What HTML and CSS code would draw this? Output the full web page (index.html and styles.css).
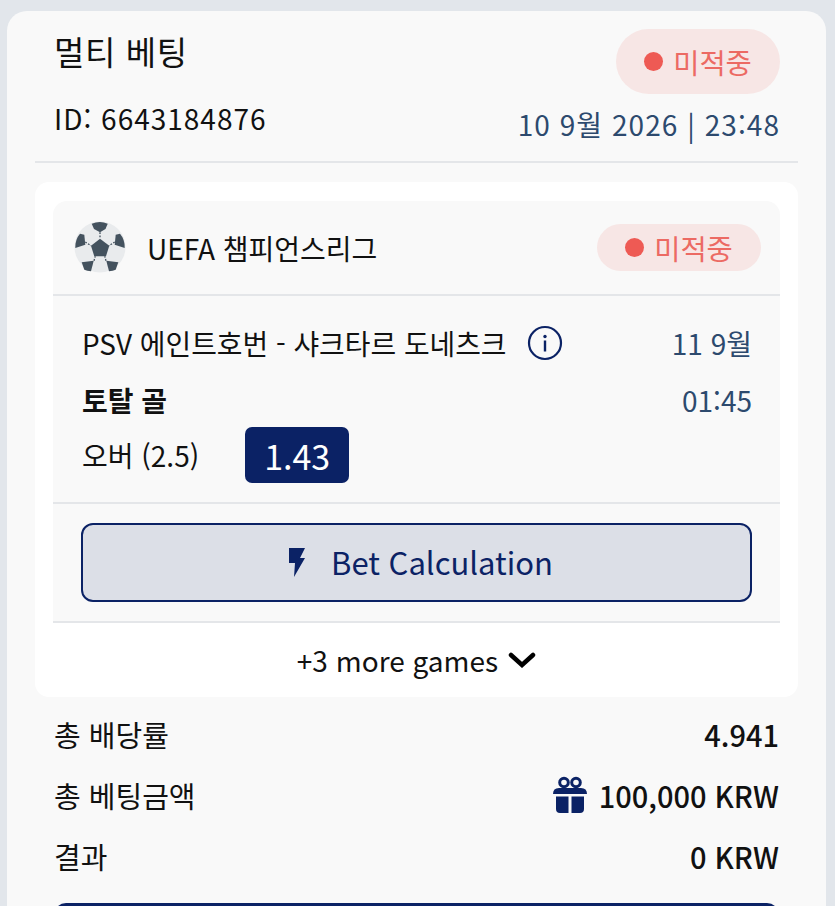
FILE: index.html
```html
<!DOCTYPE html>
<html lang="ko">
<head>
  <meta charset="UTF-8" />
  <meta name="viewport" content="width=device-width, initial-scale=1.0" />
  <title>멀티 베팅</title>
  <link rel="stylesheet" href="styles.css">
</head>
<body>
  <div class="bet-card">
    <div class="bet-head">
      <div class="bet-head-left">
        <h1>멀티 베팅</h1>
        <p class="bet-id">ID: 6643184876</p>
      </div>
      <div class="bet-head-right">
        <span class="badge badge-big"><i class="dot"></i>미적중</span>
        <p class="bet-date">10 9월 2026 | 23:48</p>
      </div>
    </div>

    <div class="panel">
      <div class="game">
        <div class="league">
          <svg class="ball" viewBox="0 0 52 52">
            <circle cx="26" cy="26" r="25.5" fill="#e9ebed"/>
            <g fill="#44525e">
              <path d="M26 17.700L35.300 24.700 32 35.300H20.300L17 24.700z"/>
              <path d="M17.700 2.700Q26 -.5 33.700 2.700L31.500 8 26 11.300 20 8z"/>
              <path d="M6 12.700L10.300 13.700 11.300 23.700 1.300 27Q1 18.500 6 12.700z"/>
              <path d="M46 12.700L41.700 13.700 40.700 23.700 50.700 27Q51 18.500 46 12.700z"/>
              <path d="M7.700 41.300L19.700 39.700 17 50.300Q13 50 10.300 48.700z"/>
              <path d="M44.300 41.300L32.300 39.700 35 50.300Q39 50 41.700 48.700z"/>
            </g>
            <g stroke="#44525e" stroke-width="1.300" stroke-dasharray="1.800 1.400" fill="none">
              <path d="M26 11.300V17.700M11.300 21l5.700 3.700M40.700 21L35 24.700M20 39.700l1.300-4.400M32 39.700l-1.300-4.400"/>
            </g>
          </svg>
          <span class="league-name">UEFA 챔피언스리그</span>
          <span class="badge badge-small"><i class="dot"></i>미적중</span>
        </div>

        <div class="game-body">
          <div class="game-row game-row-match">
            <span class="match">PSV 에인트호번 - 샤크타르 도네츠크</span>
            <svg class="info" viewBox="0 0 36 36">
              <circle cx="18" cy="18" r="16" fill="none" stroke="#0b2265" stroke-width="2.200"/>
              <circle cx="18" cy="11.500" r="1.700" fill="#0b2265"/>
              <rect x="16.800" y="15.500" width="2.400" height="11" fill="#0b2265"/>
            </svg>
            <span class="game-date">11 9월</span>
          </div>
          <div class="game-row game-row-market">
            <strong class="market">토탈 골</strong>
            <span class="game-date">01:45</span>
          </div>
          <div class="game-row game-row-pick">
            <span class="pick">오버 (2.5)</span>
            <span class="odd">1.43</span>
          </div>
        </div>

        <div class="calc-wrap">
          <button class="calc-btn">
            <svg class="bolt" viewBox="0 0 16 30"><path d="M0 1h16l-5 10h5L5 30l1-14H0z" fill="#0b2265"/></svg>
            Bet Calculation
          </button>
        </div>
      </div>

      <div class="more">+3 more games
        <svg class="chev" viewBox="0 0 28 16"><path d="M3 3l11 10L25 3" fill="none" stroke="#000" stroke-width="4.500" stroke-linecap="round"/></svg>
      </div>
    </div>

    <div class="sum">
      <div class="sum-row"><span>총 배당률</span><b>4.941</b></div>
      <div class="sum-row"><span>총 베팅금액</span>
        <b class="stake">
          <svg class="gift" viewBox="0 0 34 37">
            <path fill="#0b2265" d="M3 20.500h12.500V37H7q-4 0-4-4zM18.500 20.500H31V33q0 4-4 4h-8.500zM0 18q0-6 6-6h22q6 0 6 6z"/>
            <circle cx="11" cy="6.500" r="4.300" fill="none" stroke="#0b2265" stroke-width="3"/>
            <circle cx="23" cy="6.500" r="4.300" fill="none" stroke="#0b2265" stroke-width="3"/>
          </svg>
          100,000 KRW
        </b>
      </div>
      <div class="sum-row"><span>결과</span><b>0 KRW</b></div>
    </div>

    <div class="bottom-btn"></div>
  </div>
</body>
</html>
```

FILE: styles.css
```css
html, body {
  height: 100%;
  overflow: hidden;
}
body {
  margin: 0;
  background: #e2e6eb;
  font-family: "Noto Sans CJK KR", "Noto Sans", sans-serif;
  color: #111;
  padding: 11px 9px 0 7px;
  box-sizing: border-box;
}
p, h1 {
  margin: 0;
  font-weight: 400;
}
.bet-card {
  background: #f9f9f9;
  border-radius: 20px 20px 0 0;
  padding: 18px 28px 0;
  height: 100%;
  overflow: hidden;
  box-sizing: border-box;
}
.bet-head {
  display: flex;
  justify-content: space-between;
  border-bottom: 2px solid #e4e6e9;
  padding: 0 18px 0 19px;
  height: 132px;
  margin: 0 0 19px;
}
.bet-head-left h1 {
  font-size: 33px;
  line-height: 44px;
  letter-spacing: .6px;
}
.bet-id {
  font-size: 28px;
  line-height: 40px;
  margin-top: 25px;
  letter-spacing: 1px;
}
.bet-head-right {
  display: flex;
  flex-direction: column;
  align-items: flex-end;
}
.badge {
  display: inline-flex;
  align-items: center;
  justify-content: center;
  background: #f7e6e5;
  color: #ec6a63;
}
.badge-big {
  width: 164px;
  height: 65px;
  border-radius: 33px;
  font-size: 28.500px;
}
.badge-small {
  width: 164px;
  height: 47px;
  border-radius: 24px;
  font-size: 28.500px;
  margin-left: auto;
}
.dot {
  width: 19px;
  height: 19px;
  border-radius: 50%;
  background: #ee5a54;
  margin-right: 10px;
}
.bet-date {
  color: #2d4a6e;
  font-size: 28px;
  line-height: 40px;
  margin-top: 10px;
  letter-spacing: 1.050px;
}
.panel {
  background: #fff;
  border-radius: 14px;
  padding: 19px 18px 0;
  height: 515px;
  box-sizing: border-box;
}
.game {
  background: #f9f9f9;
  border-radius: 14px 14px 0 0;
}
.league {
  display: flex;
  align-items: center;
  height: 93px;
  padding: 0 19px 0 21px;
  border-bottom: 2px solid #e4e6e9;
}
.ball {
  width: 52px;
  height: 52px;
  margin-bottom: 2px;
}
.league-name {
  font-size: 28px;
  margin-left: 21px;
}
.game-body {
  padding: 18px 28px 0 29px;
  height: 208px;
  box-sizing: border-box;
  border-bottom: 2px solid #e4e6e9;
}
.game-row {
  display: flex;
  align-items: center;
}
.game-row-match {
  height: 58px;
}
.game-row-market {
  height: 55px;
  justify-content: space-between;
}
.game-row-pick {
  height: 56px;
}
.match {
  font-size: 27.900px;
}
.info {
  width: 36px;
  height: 36px;
  margin-left: 20px;
}
.game-date {
  margin-left: auto;
  color: #2d4a6e;
  font-size: 28px;
}
.market {
  font-size: 28px;
  font-weight: 700;
}
.pick {
  font-size: 28px;
}
.odd {
  background: #0b2265;
  color: #fff;
  border-radius: 7px;
  width: 104px;
  height: 56px;
  margin-left: 46px;
  display: flex;
  align-items: center;
  justify-content: center;
  font-size: 34px;
}
.calc-wrap {
  padding: 19px 28px 19px 28px;
  border-bottom: 2px solid #e4e6e9;
}
.calc-btn {
  width: 100%;
  height: 79px;
  background: #dcdfe7;
  border: 2px solid #0b2265;
  border-radius: 12px;
  color: #0b2265;
  font-family: inherit;
  font-size: 31px;
  padding: 0 0 2px 9px;
  display: flex;
  align-items: center;
  justify-content: center;
  gap: 26px;
}
.bolt {
  width: 16px;
  height: 30px;
}
.more {
  display: flex;
  align-items: center;
  justify-content: center;
  gap: 10px;
  height: 74px;
  font-size: 28px;
}
.chev {
  width: 28px;
  height: 16px;
}
.sum {
  padding: 6px 19px 0 19px;
}
.sum-row {
  display: flex;
  justify-content: space-between;
  align-items: center;
  height: 61px;
  font-size: 29px;
}
.sum-row b {
  font-weight: 500;
}
.stake {
  display: flex;
  align-items: center;
  gap: 12px;
}
.gift {
  width: 34px;
  height: 37px;
}
.bottom-btn {
  margin: 17px 19px 0;
  height: 60px;
  background: #0b2265;
  border-radius: 12px;
}
```
